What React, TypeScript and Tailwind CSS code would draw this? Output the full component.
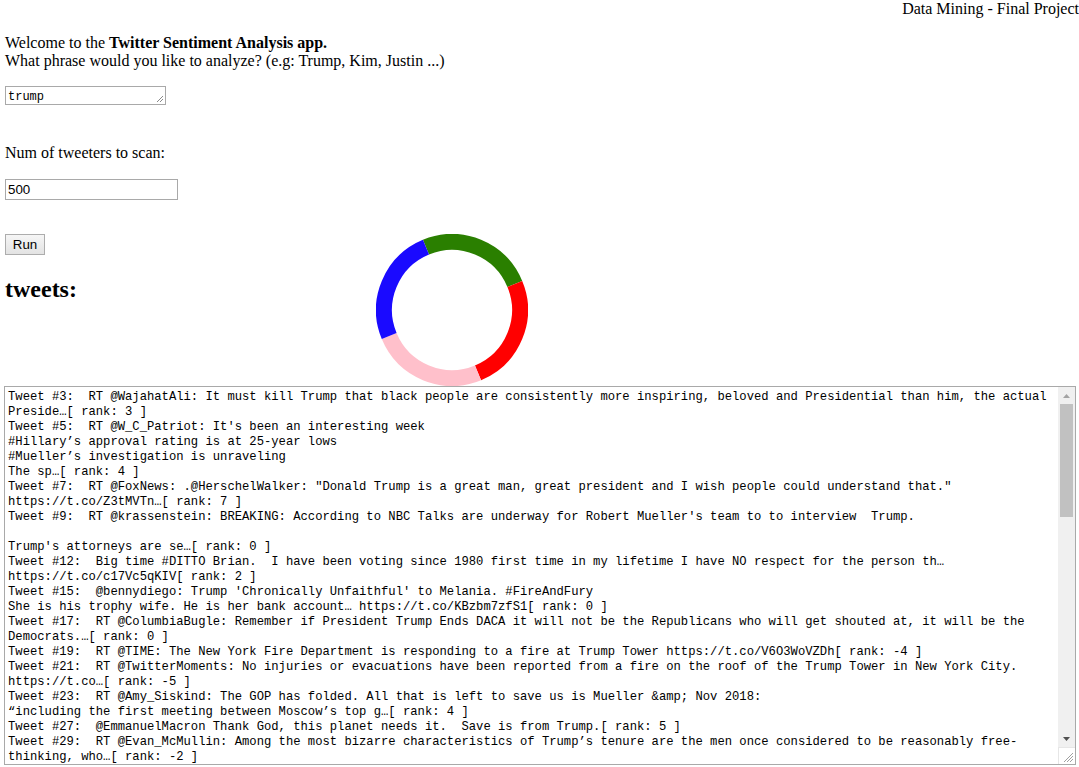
import React from "react";

const lines: string[] = [
  "Tweet #3:  RT @WajahatAli: It must kill Trump that black people are consistently more inspiring, beloved and Presidential than him, the actual",
  "Preside…[ rank: 3 ]",
  "Tweet #5:  RT @W_C_Patriot: It's been an interesting week",
  "#Hillary’s approval rating is at 25-year lows",
  "#Mueller’s investigation is unraveling",
  "The sp…[ rank: 4 ]",
  "Tweet #7:  RT @FoxNews: .@HerschelWalker: \"Donald Trump is a great man, great president and I wish people could understand that.\"",
  "https://t.co/Z3tMVTn…[ rank: 7 ]",
  "Tweet #9:  RT @krassenstein: BREAKING: According to NBC Talks are underway for Robert Mueller's team to to interview  Trump.",
  "",
  "Trump's attorneys are se…[ rank: 0 ]",
  "Tweet #12:  Big time #DITTO Brian.  I have been voting since 1980 first time in my lifetime I have NO respect for the person th…",
  "https://t.co/c17Vc5qKIV[ rank: 2 ]",
  "Tweet #15:  @bennydiego: Trump 'Chronically Unfaithful' to Melania. #FireAndFury",
  "She is his trophy wife. He is her bank account… https://t.co/KBzbm7zfS1[ rank: 0 ]",
  "Tweet #17:  RT @ColumbiaBugle: Remember if President Trump Ends DACA it will not be the Republicans who will get shouted at, it will be the",
  "Democrats.…[ rank: 0 ]",
  "Tweet #19:  RT @TIME: The New York Fire Department is responding to a fire at Trump Tower https://t.co/V6O3WoVZDh[ rank: -4 ]",
  "Tweet #21:  RT @TwitterMoments: No injuries or evacuations have been reported from a fire on the roof of the Trump Tower in New York City.",
  "https://t.co…[ rank: -5 ]",
  "Tweet #23:  RT @Amy_Siskind: The GOP has folded. All that is left to save us is Mueller &amp; Nov 2018:",
  "“including the first meeting between Moscow’s top g…[ rank: 4 ]",
  "Tweet #27:  @EmmanuelMacron Thank God, this planet needs it.  Save is from Trump.[ rank: 5 ]",
  "Tweet #29:  RT @Evan_McMullin: Among the most bizarre characteristics of Trump’s tenure are the men once considered to be reasonably free-",
  "thinking, who…[ rank: -2 ]",
];

function arc(a1: number, a2: number, r: number, cx: number, cy: number) {
  const rad = (d: number) => (d * Math.PI) / 180;
  const x1 = cx + r * Math.sin(rad(a1));
  const y1 = cy - r * Math.cos(rad(a1));
  const x2 = cx + r * Math.sin(rad(a2));
  const y2 = cy - r * Math.cos(rad(a2));
  return `M ${x1.toFixed(2)} ${y1.toFixed(2)} A ${r} ${r} 0 0 1 ${x2.toFixed(2)} ${y2.toFixed(2)}`;
}

function Donut() {
  const segs = [
    { a: -22.5, b: 67.5, c: "#2a7f00" },
    { a: 67.5, b: 157.5, c: "#ff0000" },
    { a: 157.5, b: 247.5, c: "#ffc0cb" },
    { a: 247.5, b: 337.5, c: "#1a0aff" },
  ];
  return (
    <svg width="152" height="152" viewBox="0 0 152 152" className="shrink-0">
      {segs.map((s, i) => (
        <path key={i} d={arc(s.a, s.b, 68, 76, 76)} stroke={s.c} strokeWidth="16" fill="none" />
      ))}
    </svg>
  );
}

export default function App() {
  return (
    <div className="w-[1079px] h-[767px] overflow-hidden bg-white text-black text-[16px] leading-[18px] font-['Liberation_Serif',serif]">
      <div className="text-right h-[18px]">Data Mining - Final Project</div>
      <div className="mt-[16px] pl-[5px]">
        <div>
          Welcome to the <b>Twitter Sentiment Analysis app.</b>
        </div>
        <div>What phrase would you like to analyze? (e.g: Trump, Kim, Justin ...)</div>
      </div>
      <div className="mt-[16px] pl-[5px] h-[19px] flex">
        <div className="relative w-[161px] h-[19px] border border-[#a9a9a9] bg-white px-[2px] pt-[3px] font-['Liberation_Mono',monospace] text-[12px] leading-[15px]">
          trump
          <svg width="9" height="9" viewBox="0 0 9 9" className="absolute right-[1px] bottom-[1px]">
            <path d="M8 2 L2 8 M8 5 L5 8" stroke="#8a8a8a" strokeWidth="1" />
          </svg>
        </div>
      </div>
      <div className="mt-[39px] pl-[5px]">Num of tweeters to scan:</div>
      <div className="mt-[17px] pl-[5px] flex">
        <div className="w-[173px] h-[21px] border border-[#a9a9a9] bg-white px-[2px] font-['Liberation_Sans',sans-serif] text-[13.33px] leading-[19px]">
          500
        </div>
      </div>
      <div className="mt-[34px] flex h-[152px]">
        <div className="w-[376px] pl-[5px] flex flex-col">
          <div className="w-[40px] h-[21px] border border-[#adadad] bg-gradient-to-b from-[#f6f6f6] to-[#e3e3e3] flex items-center justify-center font-['Liberation_Sans',sans-serif] text-[13.33px] leading-[15px]">
            Run
          </div>
          <h2 className="mt-[20px] font-bold text-[24px] leading-[28px]">tweets:</h2>
        </div>
        <Donut />
      </div>
      <div className="ml-[4px] w-[1072px] h-[379px] border border-[#a9a9a9] flex">
        <div className="flex-1 overflow-hidden pt-[3px] pl-[3px] font-['Liberation_Mono',monospace] text-[12.2px] leading-[15px] whitespace-pre">
          {lines.map((l, i) => (
            <div key={i} className="h-[15px]">
              {l}
            </div>
          ))}
        </div>
        <div className="w-[17px] bg-[#f0f0f0] flex flex-col">
          <div className="h-[17px] flex items-center justify-center">
            <svg width="7" height="4" viewBox="0 0 7 4">
              <path d="M0 4 L3.5 0 L7 4 Z" fill="#a3a3a3" />
            </svg>
          </div>
          <div className="h-[113px] mx-[2px] bg-[#c1c1c1]" />
          <div className="flex-1" />
          <div className="h-[17px] flex items-center justify-center">
            <svg width="7" height="4" viewBox="0 0 7 4">
              <path d="M0 0 L7 0 L3.5 4 Z" fill="#505050" />
            </svg>
          </div>
          <div className="h-[17px] bg-white border-t border-l border-[#e6e6e6] flex items-end justify-end p-[2px]">
            <svg width="10" height="10" viewBox="0 0 10 10">
              <path d="M10 1 L1 10 M10 4 L4 10 M10 7 L7 10" stroke="#a0a0a0" strokeWidth="1" />
            </svg>
          </div>
        </div>
      </div>
    </div>
  );
}
